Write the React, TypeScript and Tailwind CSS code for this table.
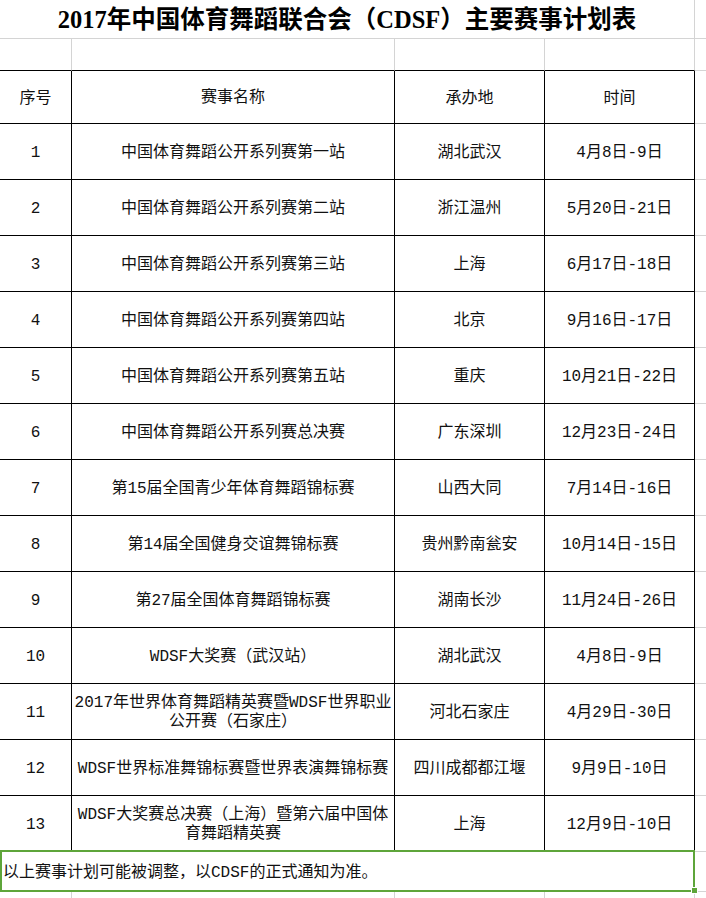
import React from "react";

type Row = { no: number; name: string; place: string; date: string };

const rows: Row[] = [
  { no: 1, name: "中国体育舞蹈公开系列赛第一站", place: "湖北武汉", date: "4月8日-9日" },
  { no: 2, name: "中国体育舞蹈公开系列赛第二站", place: "浙江温州", date: "5月20日-21日" },
  { no: 3, name: "中国体育舞蹈公开系列赛第三站", place: "上海", date: "6月17日-18日" },
  { no: 4, name: "中国体育舞蹈公开系列赛第四站", place: "北京", date: "9月16日-17日" },
  { no: 5, name: "中国体育舞蹈公开系列赛第五站", place: "重庆", date: "10月21日-22日" },
  { no: 6, name: "中国体育舞蹈公开系列赛总决赛", place: "广东深圳", date: "12月23日-24日" },
  { no: 7, name: "第15届全国青少年体育舞蹈锦标赛", place: "山西大同", date: "7月14日-16日" },
  { no: 8, name: "第14届全国健身交谊舞锦标赛", place: "贵州黔南瓮安", date: "10月14日-15日" },
  { no: 9, name: "第27届全国体育舞蹈锦标赛", place: "湖南长沙", date: "11月24日-26日" },
  { no: 10, name: "WDSF大奖赛（武汉站）", place: "湖北武汉", date: "4月8日-9日" },
  {
    no: 11,
    name: "2017年世界体育舞蹈精英赛暨WDSF世界职业\n公开赛（石家庄）",
    place: "河北石家庄",
    date: "4月29日-30日",
  },
  { no: 12, name: "WDSF世界标准舞锦标赛暨世界表演舞锦标赛", place: "四川成都都江堰", date: "9月9日-10日" },
  {
    no: 13,
    name: "WDSF大奖赛总决赛（上海）暨第六届中国体\n育舞蹈精英赛",
    place: "上海",
    date: "12月9日-10日",
  },
];

function TableRow({ cells, h }: { cells: React.ReactNode[]; h: string }) {
  return (
    <div className={`flex ${h}`}>
      <div className="w-[72px] shrink-0 border-r border-b border-black flex items-center justify-center pt-[3px]">
        {cells[0]}
      </div>
      <div className="w-[323px] shrink-0 border-r border-b border-black flex items-center justify-center pt-[3px] text-center whitespace-pre-line leading-[19px]">
        {cells[1]}
      </div>
      <div className="w-[150px] shrink-0 border-r border-b border-black flex items-center justify-center pt-[3px] whitespace-nowrap">
        {cells[2]}
      </div>
      <div className="w-[150px] shrink-0 border-r border-b border-black flex items-center justify-center pt-[3px] whitespace-nowrap">
        {cells[3]}
      </div>
      <div className="flex-1 border-b border-[#d4d4d4]" />
    </div>
  );
}

export default function App() {
  return (
    <div className="w-[706px] h-[898px] overflow-hidden bg-white text-[#111] text-[16px] font-['Liberation_Mono','Noto_Sans_CJK_SC',monospace]">
      {/* Title */}
      <div className="flex h-[39px] border-b border-[#d4d4d4]">
        <div className="w-[695px] shrink-0 border-r border-[#d4d4d4] flex items-center justify-center pt-[2px] font-['Liberation_Serif','Noto_Sans_CJK_SC',serif] font-bold text-[24.5px] text-black">
          2017年中国体育舞蹈联合会（CDSF）主要赛事计划表
        </div>
        <div className="flex-1" />
      </div>

      {/* blank row */}
      <div className="flex h-[32px]">
        <div className="w-[72px] shrink-0 border-r border-b border-r-[#d4d4d4] border-b-black" />
        <div className="w-[323px] shrink-0 border-r border-b border-r-[#d4d4d4] border-b-black" />
        <div className="w-[150px] shrink-0 border-r border-b border-r-[#d4d4d4] border-b-black" />
        <div className="w-[150px] shrink-0 border-r border-b border-r-[#d4d4d4] border-b-black" />
        <div className="flex-1 border-b border-[#d4d4d4]" />
      </div>

      <TableRow h="h-[53px]" cells={["序号", "赛事名称", "承办地", "时间"]} />
      {rows.map((r) => (
        <TableRow key={r.no} h="h-[56px]" cells={[r.no, r.name, r.place, r.date]} />
      ))}

      {/* note row */}
      <div className="relative flex h-[40px]">
        <div className="w-[695px] shrink-0 border-r border-b border-[#d4d4d4] flex items-center pl-[3px] pt-[3px]">
          以上赛事计划可能被调整，以CDSF的正式通知为准。
        </div>
        <div className="flex-1 border-b border-[#d4d4d4]" />
        {/* selection outline */}
        <div className="absolute left-0 top-[-2px] w-[695px] h-[42px] border-2 border-[#5ea53a] pointer-events-none" />
        <div className="absolute left-[691px] top-[35px] w-[7px] h-[7px] bg-[#5ea53a] border border-white" />
      </div>

      {/* trailing gridlines */}
      <div className="flex h-[10px]">
        <div className="w-[72px] shrink-0 border-r border-[#d4d4d4]" />
        <div className="w-[323px] shrink-0 border-r border-[#d4d4d4]" />
        <div className="w-[150px] shrink-0 border-r border-[#d4d4d4]" />
        <div className="w-[150px] shrink-0 border-r border-[#d4d4d4]" />
      </div>
    </div>
  );
}
